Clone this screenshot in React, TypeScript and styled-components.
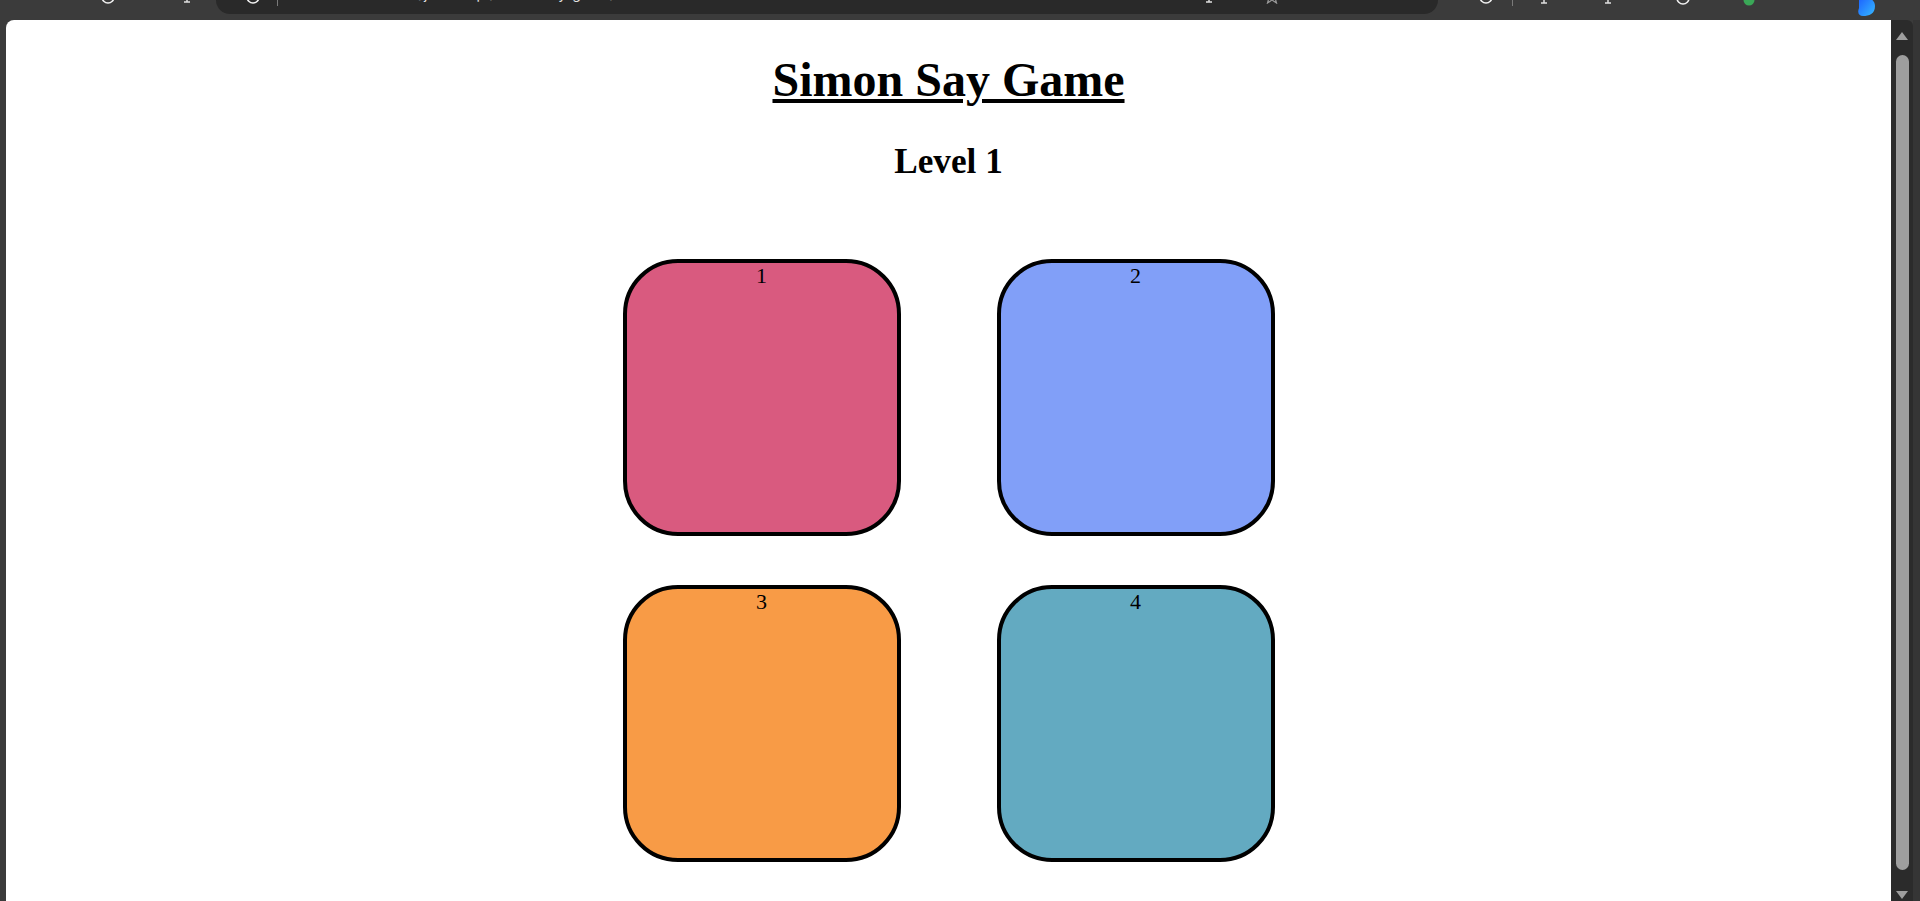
import React from "react";
import styled, { createGlobalStyle } from "styled-components";

const GlobalStyle = createGlobalStyle`
  html, body {
    margin: 0;
    padding: 0;
    background: #3b3b3b;
    overflow: hidden;
  }
  #root {
    height: 100vh;
  }
`;

const Frame = styled.div`
  height: 100vh;
  display: grid;
  grid-template-rows: 20px 1fr;
  background: #3b3b3b;
`;

const TopBar = styled.div`
  display: flex;
  align-items: flex-start;
  overflow: hidden;
  background: #3b3b3b;
  color: #e8e8e8;
  font-family: "Inter", "Liberation Sans", sans-serif;
`;

const Spacer = styled.div<{ $w: number }>`
  flex: 0 0 ${(p) => p.$w}px;
`;

const ChromeIcon = styled.svg<{ $shift?: number }>`
  flex: 0 0 auto;
  margin-top: ${(p) => -(p.$shift ?? 10)}px;
  display: block;
`;

const AddressBar = styled.div`
  flex: 0 0 1222px;
  height: 14px;
  background: #292929;
  border-radius: 0 0 14px 14px;
  display: flex;
  align-items: flex-start;
  overflow: hidden;
`;

const UrlText = styled.span`
  font-size: 14px;
  line-height: 16px;
  margin-top: -14px;
  white-space: nowrap;
  color: #e3e3e3;
  letter-spacing: 0.2px;
`;

const Divider = styled.div`
  flex: 0 0 1px;
  height: 6px;
  background: #7a7a7a;
`;

const Body = styled.div`
  display: flex;
  min-height: 0;
`;

const LeftStrip = styled.div`
  flex: 0 0 6px;
  background: #3b3b3b;
`;

const Viewport = styled.main`
  flex: 1;
  background: #ffffff;
  border-top-left-radius: 8px;
  overflow: hidden;
  display: flex;
  flex-direction: column;
  align-items: center;
  font-family: "Liberation Serif", "Times New Roman", serif;
  color: #000;
`;

const Title = styled.h1`
  margin: 32px 0 0;
  font-size: 48px;
  line-height: 1.15;
  font-weight: bold;
  text-decoration: underline;
  text-decoration-thickness: 4px;
  text-underline-offset: 3px;
`;

const Level = styled.h2`
  margin: 34.5px 0 0;
  font-size: 35.2px;
  line-height: 1.15;
  font-weight: bold;
`;

const Board = styled.div`
  margin-top: 77px;
  display: grid;
  grid-template-columns: repeat(2, 278px);
  grid-auto-rows: 277px;
  column-gap: 96px;
  row-gap: 49px;
`;

const Pad = styled.div<{ $color: string }>`
  box-sizing: border-box;
  background: ${(p) => p.$color};
  border: 4px solid #000;
  border-radius: 55px;
  text-align: center;
  font-size: 22px;
  line-height: 1.15;
`;

const Scrollbar = styled.div`
  flex: 0 0 29px;
  display: flex;
  background: #3b3b3b;
`;

const Track = styled.div`
  flex: 0 0 22px;
  background: #2b2b2b;
  border-top-right-radius: 6px;
  display: flex;
  flex-direction: column;
  align-items: center;
`;

const Arrow = styled.div<{ $down?: boolean }>`
  width: 0;
  height: 0;
  border-left: 6px solid transparent;
  border-right: 6px solid transparent;
  ${(p) =>
    p.$down
      ? `border-top: 8px solid #9e9e9e; margin-top: 21px;`
      : `border-bottom: 8px solid #9e9e9e; margin-top: 12px;`}
`;

const Thumb = styled.div`
  margin-top: 15px;
  width: 13px;
  height: 815px;
  flex: 0 0 auto;
  border-radius: 7px;
  background: #9e9e9e;
`;

const EdgeStrip = styled.div`
  flex: 1;
  background: #353535;
`;

const Ring = ({ shift = 10, color = "#f0f0f0" }: { shift?: number; color?: string }) => (
  <ChromeIcon $shift={shift} width="16" height="16" viewBox="0 0 16 16">
    <circle cx="8" cy="8" r="6" fill="none" stroke={color} strokeWidth="1.6" />
  </ChromeIcon>
);

const Dot = ({ color, shift = 10, size = 12 }: { color: string; shift?: number; size?: number }) => (
  <ChromeIcon $shift={shift} width={size} height={size} viewBox="0 0 12 12">
    <circle cx="6" cy="6" r="5.5" fill={color} />
  </ChromeIcon>
);

const Tick = ({ shift = 10 }: { shift?: number }) => (
  <ChromeIcon $shift={shift} width="10" height="14" viewBox="0 0 10 14">
    <path d="M5 0 L5 12 M2 12 L8 12" stroke="#e0e0e0" strokeWidth="1.5" fill="none" />
  </ChromeIcon>
);

const Star = () => (
  <ChromeIcon $shift={12} width="16" height="16" viewBox="0 0 16 16">
    <path d="M8 1 L10 6 L15 6 L11 9.5 L12.5 15 L8 12 L3.5 15 L5 9.5 L1 6 L6 6 Z" fill="none" stroke="#9a9a9a" strokeWidth="1.2" />
  </ChromeIcon>
);

const BlueLogo = () => (
  <ChromeIcon $shift={6} width="24" height="24" viewBox="0 0 24 24">
    <defs>
      <linearGradient id="bl" x1="0" y1="0" x2="1" y2="1">
        <stop offset="0" stopColor="#1a5cff" />
        <stop offset="1" stopColor="#36b9ff" />
      </linearGradient>
    </defs>
    <path d="M4 2 C10 2 20 4 20 12 C20 20 14 22 8 22 C4 22 2 19 4 14 Z" fill="url(#bl)" />
  </ChromeIcon>
);

const pads = [
  { id: 1, color: "#d95a7f" },
  { id: 2, color: "#819ff8" },
  { id: 3, color: "#f89b46" },
  { id: 4, color: "#63aac1" },
];

export default function App() {
  return (
    <>
      <GlobalStyle />
      <Frame>
        <TopBar>
          <Spacer $w={100} />
          <Ring shift={11} />
          <Spacer $w={66} />
          <Tick shift={10} />
          <Spacer $w={24} />
          <AddressBar>
            <Spacer $w={29} />
            <Ring shift={11} />
            <Spacer $w={16} />
            <Divider />
            <Spacer $w={46} />
            <UrlText>127.0.0.1:5500/javascript/simon-say-game/index.html</UrlText>
            <Spacer $w={518} />
            <Tick shift={10} />
            <Spacer $w={50} />
            <Star />
          </AddressBar>
          <Spacer $w={40} />
          <Ring shift={11} />
          <Spacer $w={18} />
          <Divider />
          <Spacer $w={26} />
          <Tick shift={9} />
          <Spacer $w={54} />
          <Tick shift={9} />
          <Spacer $w={62} />
          <Ring shift={10} />
          <Spacer $w={52} />
          <Dot color="#3aa757" shift={6} size={12} />
          <Spacer $w={100} />
          <BlueLogo />
        </TopBar>
        <Body>
          <LeftStrip />
          <Viewport>
            <Title>Simon Say Game</Title>
            <Level>Level 1</Level>
            <Board>
              {pads.map((p) => (
                <Pad key={p.id} $color={p.color}>
                  {p.id}
                </Pad>
              ))}
            </Board>
          </Viewport>
          <Scrollbar>
            <Track>
              <Arrow />
              <Thumb />
              <Arrow $down />
            </Track>
            <EdgeStrip />
          </Scrollbar>
        </Body>
      </Frame>
    </>
  );
}
